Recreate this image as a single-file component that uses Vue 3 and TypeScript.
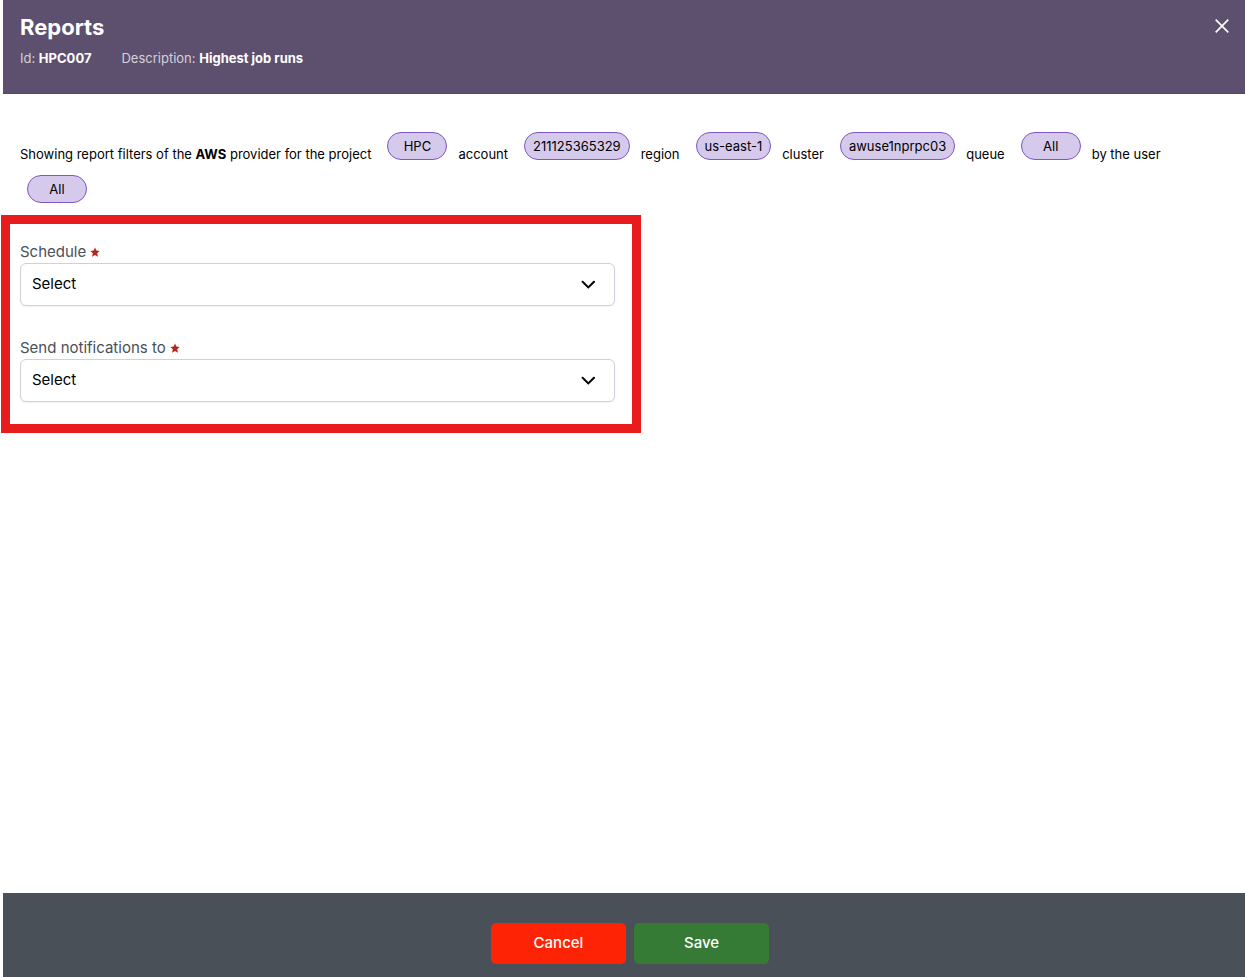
<script setup lang="ts">
import { ref } from 'vue'

interface Filter {
  label: string
  value: string
}

interface Field {
  id: string
  label: string
}

const filters: Filter[] = [
  { label: 'account', value: '211125365329' },
  { label: 'region', value: 'us-east-1' },
  { label: 'cluster', value: 'awuse1nprpc03' },
  { label: 'queue', value: 'All' },
  { label: 'by the user', value: 'All' },
]

const fields: Field[] = [
  { id: 'schedule', label: 'Schedule' },
  { id: 'recipients', label: 'Send notifications to' },
]

const selected = ref<Record<string, string>>({ schedule: '', recipients: '' })
</script>

<template>
  <div class="panel">
    <header class="header">
      <div>
        <h1 class="title">Reports</h1>
        <p class="meta">
          <span>Id: <strong>HPC007</strong></span>
          <span>Description: <strong>Highest job runs</strong></span>
        </p>
      </div>
      <button class="close" type="button" aria-label="Close">
        <svg width="14" height="14" viewBox="0 0 14 14" fill="none" stroke="currentColor" stroke-width="1.7">
          <path d="M0.7 0.7 13.3 13.3M13.3 0.7 0.7 13.3" />
        </svg>
      </button>
    </header>

    <main class="body">
      <div class="filters">
        <span class="text">Showing report filters of the <strong>AWS</strong> provider for the project</span>
        <span class="chip">HPC</span>
        <template v-for="filter in filters" :key="filter.label">
          <span class="text">{{ filter.label }}</span>
          <span class="chip">{{ filter.value }}</span>
        </template>
      </div>

      <form class="form">
        <div v-for="field in fields" :key="field.id" class="field">
          <label class="label" :for="field.id">
            {{ field.label }}
            <svg class="star" width="10" height="10" viewBox="0 0 10 10" fill="currentColor" aria-hidden="true">
              <path d="M5 0.6 6.35 3.6 9.7 4 7.2 6.3 7.9 9.7 5 8 2.1 9.7 2.8 6.3 0.3 4 3.65 3.6Z" />
            </svg>
          </label>
          <div class="control">
            <select :id="field.id" v-model="selected[field.id]" class="select" required>
              <option value="">Select</option>
            </select>
            <svg class="chevron" width="14" height="10" viewBox="0 0 14 10" fill="none" stroke="currentColor" stroke-width="2" aria-hidden="true">
              <path d="M1.6 1.8 7.3 7.4 13 1.8" stroke-linecap="round" stroke-linejoin="miter" />
            </svg>
          </div>
        </div>
      </form>
    </main>

    <footer class="footer">
      <button class="button cancel" type="button">Cancel</button>
      <button class="button save" type="button">Save</button>
    </footer>
  </div>
</template>

<style>
body {
  margin: 0;
  background: #fff;
}
</style>

<style scoped>
.panel {
  display: flex;
  flex-direction: column;
  min-height: 100vh;
  color: #000;
  font-family: Inter, "Liberation Sans", sans-serif;
  font-size: 13px;
}

.header {
  display: flex;
  justify-content: space-between;
  align-items: flex-start;
  box-sizing: border-box;
  min-height: 94px;
  margin-left: 3px;
  padding: 12px 16px 12px 17px;
  background: #5d506e;
  color: #fff;
  box-shadow: inset 0 -2px 2px -1px #54466a;
}

.title {
  margin: 0;
  font-size: 22px;
  line-height: 30px;
  font-weight: 700;
}

.meta {
  display: flex;
  gap: 30px;
  margin: 6px 0 0;
  line-height: 20px;
  color: #d5d1db;
}

.meta strong {
  color: #fff;
}

.close {
  display: flex;
  margin-top: 7px;
  padding: 0;
  border: 0;
  background: none;
  color: #fff;
}

.body {
  flex: 1;
}

.filters {
  display: flex;
  flex-wrap: wrap;
  row-gap: 15px;
  padding: 38px 17px 12px 20px;
  line-height: 20px;
}

.text {
  padding: 12px 9px 0 0;
  margin-bottom: -4px;
}

.chip {
  box-sizing: border-box;
  min-width: 60px;
  height: 28px;
  margin: 0 11px 0 7px;
  padding: 3px 8px;
  border: 1px solid #7e57c2;
  border-radius: 14px;
  background: #d5caeb;
  text-align: center;
}

.form {
  display: flex;
  flex-direction: column;
  gap: 31px;
  box-sizing: border-box;
  max-width: 640px;
  margin-left: 1px;
  padding: 17px 17px 22px 10px;
  border: 9px solid #e81c1c;
}

.label {
  display: flex;
  align-items: center;
  gap: 4px;
  height: 20px;
  padding-bottom: 2px;
  color: #495057;
  font-size: 15px;
}

.star {
  margin-top: 1px;
  color: #b3261e;
}

.control {
  display: grid;
  align-items: center;
}

.select,
.chevron {
  grid-area: 1 / 1;
}

.select {
  width: 100%;
  height: 43px;
  padding: 0 40px 3px 11px;
  border: 1px solid #ced0da;
  border-radius: 6px;
  appearance: none;
  background: #fff;
  box-shadow: 0 1px 2px #1212170d;
  color: #000;
  font: inherit;
  font-size: 15px;
}

.chevron {
  justify-self: end;
  margin-right: 20px;
  pointer-events: none;
}

.footer {
  display: flex;
  justify-content: center;
  gap: 8px;
  margin-left: 3px;
  padding: 30px 0 13px 12px;
  background: #4a5058;
}

.button {
  width: 135px;
  height: 41px;
  padding: 0 0 2px;
  border: 0;
  border-radius: 5px;
  color: #fff;
  font: inherit;
  font-size: 15px;
  font-weight: 500;
}

.cancel {
  background: #ff2306;
}

.save {
  background: #357a35;
}
</style>
